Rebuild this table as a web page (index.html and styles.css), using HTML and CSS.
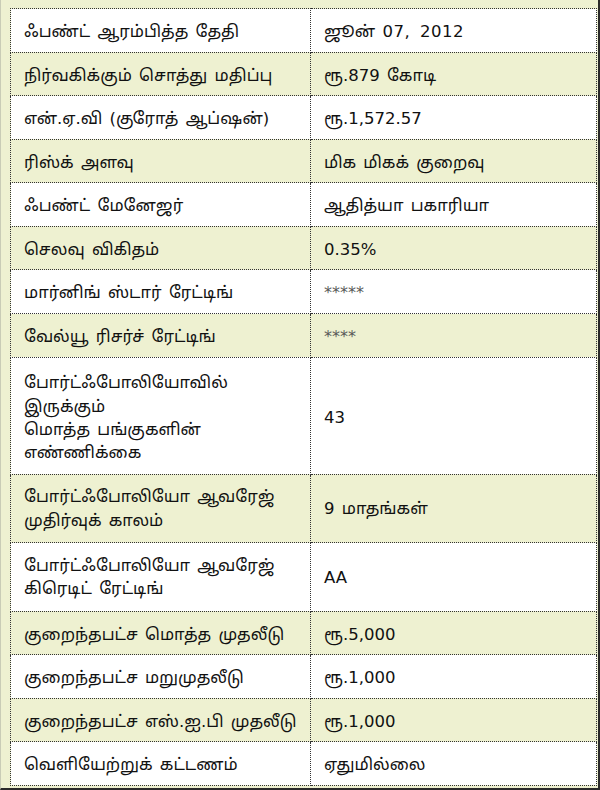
FILE: index.html
```html
<!DOCTYPE html>
<html lang="ta">
<head>
<meta charset="utf-8">
<title>Fund details</title>
<link rel="stylesheet" href="styles.css">
</head>
<body>
<div class="frame">
  <table class="info">
    <colgroup><col class="c1"><col class="c2"></colgroup>
    <tr><td><div class="ln">ஃபண்ட் ஆரம்பித்த தேதி</div></td><td><div class="ln">ஜூன் <span class="date">07, 2012</span></div></td></tr>
    <tr class="alt"><td><div class="ln">நிர்வகிக்கும் சொத்து மதிப்பு</div></td><td><div class="ln">ரூ.879 கோடி</div></td></tr>
    <tr><td><div class="ln">என்.ஏ.வி (குரோத் ஆப்ஷன்)</div></td><td><div class="ln">ரூ.1,572.57</div></td></tr>
    <tr class="alt"><td><div class="ln">ரிஸ்க் அளவு</div></td><td><div class="ln">மிக மிகக் குறைவு</div></td></tr>
    <tr><td><div class="ln">ஃபண்ட் மேனேஜர்</div></td><td><div class="ln">ஆதித்யா பகாரியா</div></td></tr>
    <tr class="alt"><td><div class="ln">செலவு விகிதம்</div></td><td><div class="ln">0.35%</div></td></tr>
    <tr><td><div class="ln">மார்னிங் ஸ்டார் ரேட்டிங்</div></td><td><div class="ln stars">*****</div></td></tr>
    <tr class="alt"><td><div class="ln">வேல்யூ ரிசர்ச் ரேட்டிங்</div></td><td><div class="ln stars">****</div></td></tr>
    <tr class="tall4"><td><div class="ln">போர்ட்ஃபோலியோவில்</div><div class="ln">இருக்கும்</div><div class="ln">மொத்த பங்குகளின்</div><div class="ln">எண்ணிக்கை</div></td><td><div class="ln">43</div></td></tr>
    <tr class="alt tall2"><td><div class="ln">போர்ட்ஃபோலியோ ஆவரேஜ்</div><div class="ln">முதிர்வுக் காலம்</div></td><td><div class="ln">9 மாதங்கள்</div></td></tr>
    <tr class="tall2"><td><div class="ln">போர்ட்ஃபோலியோ ஆவரேஜ்</div><div class="ln">கிரெடிட் ரேட்டிங்</div></td><td><div class="ln">AA</div></td></tr>
    <tr class="alt"><td><div class="ln">குறைந்தபட்ச மொத்த முதலீடு</div></td><td><div class="ln">ரூ.5,000</div></td></tr>
    <tr><td><div class="ln">குறைந்தபட்ச மறுமுதலீடு</div></td><td><div class="ln">ரூ.1,000</div></td></tr>
    <tr class="alt"><td><div class="ln">குறைந்தபட்ச எஸ்.ஐ.பி முதலீடு</div></td><td><div class="ln">ரூ.1,000</div></td></tr>
    <tr><td><div class="ln">வெளியேற்றுக் கட்டணம்</div></td><td><div class="ln">ஏதுமில்லை</div></td></tr>
  </table>
</div>
</body>
</html>
```
FILE: styles.css
```css
html, body {
  margin: 0;
  padding: 0;
  background: #ffffff;
}
.frame {
  box-sizing: border-box;
  width: 600px;
  height: 790px;
  background: #eef1d1;
  border-left: 1px solid #c9ccb6;
  border-right: 2px solid #2a2a2a;
  border-bottom: 2px solid #2a2a2a;
  padding: 8px 3px 3px 9px;
  font-family: "DejaVu Sans", "Noto Sans Tamil", "Lohit Tamil", "Noto Sans", sans-serif;
  color: #111111;
}
.info {
  width: 586px;
  table-layout: fixed;
  border-collapse: collapse;
  border: 1px dotted #333333;
  font-size: 16.5px;
  line-height: 23px;
  word-spacing: 2px;
}
.info col.c1 {
  width: 300px;
}
.info col.c2 {
  width: 286px;
}
.info td {
  border: 1px dotted #333333;
  padding: 11px 13px 8.2px;
  vertical-align: middle;
  background: #ffffff;
}
.info tr.alt td {
  background: #eef1d1;
}
.ln {
  height: 23.4px;
  white-space: nowrap;
}
.stars {
  color: #5a5a5a;
  font-size: 16px;
}
.date {
  letter-spacing: 0.5px;
  word-spacing: 4px;
}
.info tr.tall4 td {
  padding-top: 13.6px;
  padding-bottom: 8.8px;
}
.info tr.tall2 td {
  padding-top: 10.8px;
  padding-bottom: 9.9px;
}
```
